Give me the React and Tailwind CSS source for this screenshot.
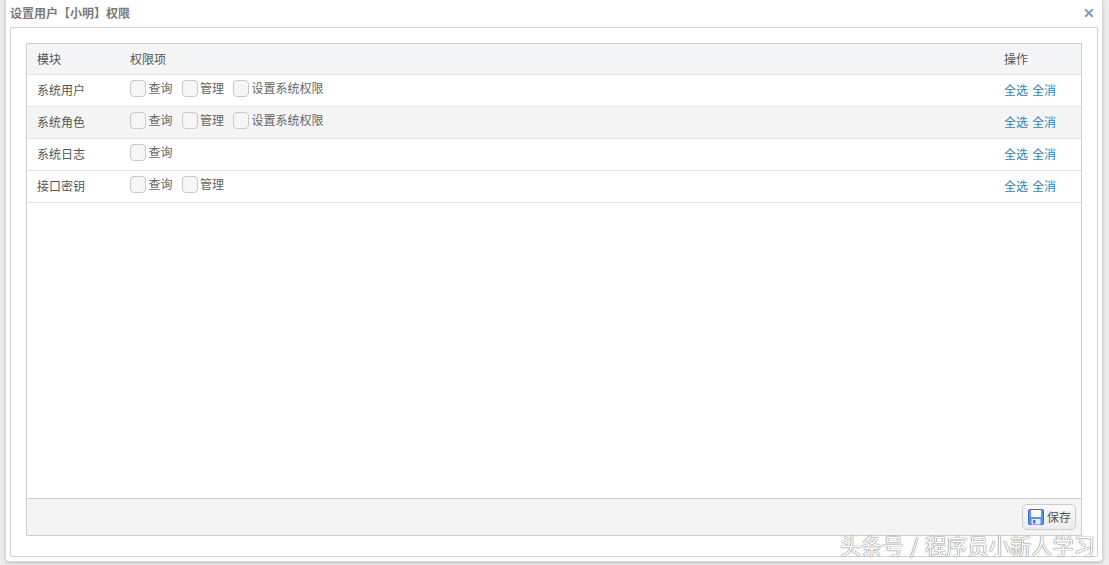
import React from "react";

const FONT = { fontFamily: '"Noto Sans CJK SC", "Liberation Sans", sans-serif' };

const rows = [
  { name: "系统用户", perms: ["查询", "管理", "设置系统权限"], alt: false },
  { name: "系统角色", perms: ["查询", "管理", "设置系统权限"], alt: true },
  { name: "系统日志", perms: ["查询"], alt: false },
  { name: "接口密钥", perms: ["查询", "管理"], alt: false },
];

function Row({ name, perms, alt }) {
  return (
    <div className={`flex h-[32px] shrink-0 border-b border-[#e4e4e4] text-[12px] ${alt ? "bg-[#f5f5f5]" : "bg-white"}`}>
      <div className="w-[103px] pl-[10px] pt-[6px] leading-[18px] text-[#555]">{name}</div>
      <div className="flex flex-1 items-start gap-[9px] pt-[4px]">
        {perms.map((p) => (
          <label key={p} className="flex items-center gap-[2.5px] leading-[18px] text-[#666]">
            <span className="h-[17px] w-[16px] rounded-[4px] border border-[#c8c8c8] bg-[#f6f6f6]" />
            <span>{p}</span>
          </label>
        ))}
      </div>
      <div className="flex w-[77px] gap-[4px] pt-[6px] leading-[18px] text-[#2a85b5]">
        <span>全选</span>
        <span>全消</span>
      </div>
    </div>
  );
}

function SaveIcon() {
  return (
    <svg width="16" height="16" viewBox="0 0 16 16">
      <rect x="0.5" y="0.5" width="15" height="15" rx="1" fill="#5b92e6" stroke="#3a6fc4" />
      <rect x="3" y="1" width="10" height="7" fill="#f7f9fd" />
      <rect x="3.5" y="10" width="9" height="5.5" fill="#e6ebf3" />
      <rect x="5" y="11" width="2.5" height="3.5" fill="#4f7fcc" />
    </svg>
  );
}

export default function App() {
  return (
    <div style={FONT} className="relative h-[565px] w-[1109px] overflow-hidden bg-[#ececec]">
      <div className="ml-[5px] flex h-[562px] w-[1098px] flex-col rounded-b-[4px] border-x border-b border-[#d8d8d8] bg-white shadow-[0_1px_3px_rgba(0,0,0,0.2)]">
        <div className="flex h-[27px] shrink-0 items-center justify-between pb-[2px] pl-[4px] pr-[8px]">
          <span className="text-[12px] font-bold text-[#7a7a7a]">设置用户【小明】权限</span>
          <svg width="10" height="10" viewBox="0 0 10 10" className="mt-[1px]">
            <path d="M1.2 1.2 L8.8 8.8 M8.8 1.2 L1.2 8.8" stroke="#7d9fbd" strokeWidth="2" />
          </svg>
        </div>
        <div className="mx-[4px] mb-[4px] flex flex-1 flex-col rounded-b-[2px] border border-[#d2d2d2] px-[15px] pb-[20px] pt-[15px]">
          <div className="flex flex-1 flex-col border border-[#cfcfcf]">
            <div className="flex h-[31px] shrink-0 items-center border-b border-[#e4e4e4] bg-[#f4f5f7] text-[12px] text-[#555]">
              <div className="w-[103px] pl-[10px]">模块</div>
              <div className="flex-1">权限项</div>
              <div className="w-[77px]">操作</div>
            </div>
            {rows.map((r) => (
              <Row key={r.name} {...r} />
            ))}
            <div className="flex-1 bg-white" />
            <div className="flex h-[37px] shrink-0 items-center justify-end border-t border-[#cfcfcf] bg-[#f4f4f4] pr-[5px]">
              <button className="flex h-[26px] w-[54px] items-center gap-[3px] rounded-[5px] border border-[#cccccc] bg-gradient-to-b from-[#fafafa] to-[#ececec] pl-[5px] text-[12px] text-[#555]">
                <SaveIcon />
                <span>保存</span>
              </button>
            </div>
          </div>
        </div>
      </div>
      <div
        className="absolute left-[840px] top-[531px] whitespace-nowrap text-[21.25px] leading-[28px] text-white [word-spacing:1.75px]"
        style={{ textShadow: "0 0 1px #666, 0 0 1px #666" }}
      >
        头条号 / 程序员小新人学习
      </div>
    </div>
  );
}
